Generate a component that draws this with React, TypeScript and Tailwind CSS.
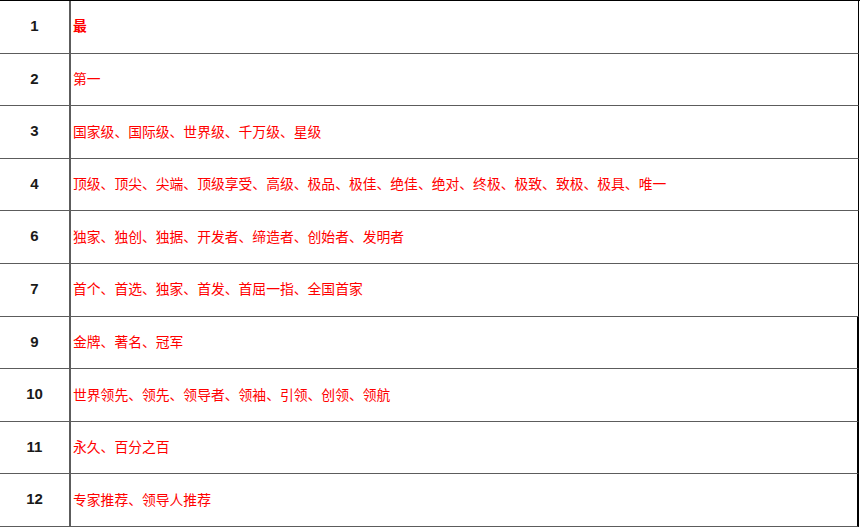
import React from "react";

const rows: { n: string; t: string; bold?: boolean }[] = [
  { n: "1", t: "最", bold: true },
  { n: "2", t: "第一" },
  { n: "3", t: "国家级、国际级、世界级、千万级、星级" },
  { n: "4", t: "顶级、顶尖、尖端、顶级享受、高级、极品、极佳、绝佳、绝对、终极、极致、致极、极具、唯一" },
  { n: "6", t: "独家、独创、独据、开发者、缔造者、创始者、发明者" },
  { n: "7", t: "首个、首选、独家、首发、首屈一指、全国首家" },
  { n: "9", t: "金牌、著名、冠军" },
  { n: "10", t: "世界领先、领先、领导者、领袖、引领、创领、领航" },
  { n: "11", t: "永久、百分之百" },
  { n: "12", t: "专家推荐、领导人推荐" },
];

export default function App() {
  return (
    <div className="w-[860px] h-[528px] bg-white overflow-hidden">
      <div className="border-t border-t-black">
        {rows.map((r, i) => (
          <div
            key={r.n}
            className={
              i < 6
                ? "flex h-[52.6px] w-[859px] border-b border-b-[#5c5c5c] border-r border-r-black"
                : "flex h-[52.6px] w-[859px] border-b border-b-[#5c5c5c] border-r-2 border-r-black"
            }
          >
            <div
              className="w-[69px] shrink-0 flex items-center justify-center pb-[1px] text-[15px] font-bold text-[#1a1a1a]"
              style={{ fontFamily: '"Liberation Sans", Arial, sans-serif' }}
            >
              {r.n}
            </div>
            <div className="w-[1.5px] bg-[#5c5c5c] shrink-0" />
            <div
              className={
                r.bold
                  ? "flex items-center pl-[2.5px] pb-[2px] text-[13.8px] text-[#ff0000] font-bold"
                  : "flex items-center pl-[2.5px] pb-[2px] text-[13.8px] text-[#ff0000]"
              }
              style={{ fontFamily: '"Noto Sans CJK SC", sans-serif' }}
            >
              {r.t}
            </div>
          </div>
        ))}
      </div>
    </div>
  );
}
